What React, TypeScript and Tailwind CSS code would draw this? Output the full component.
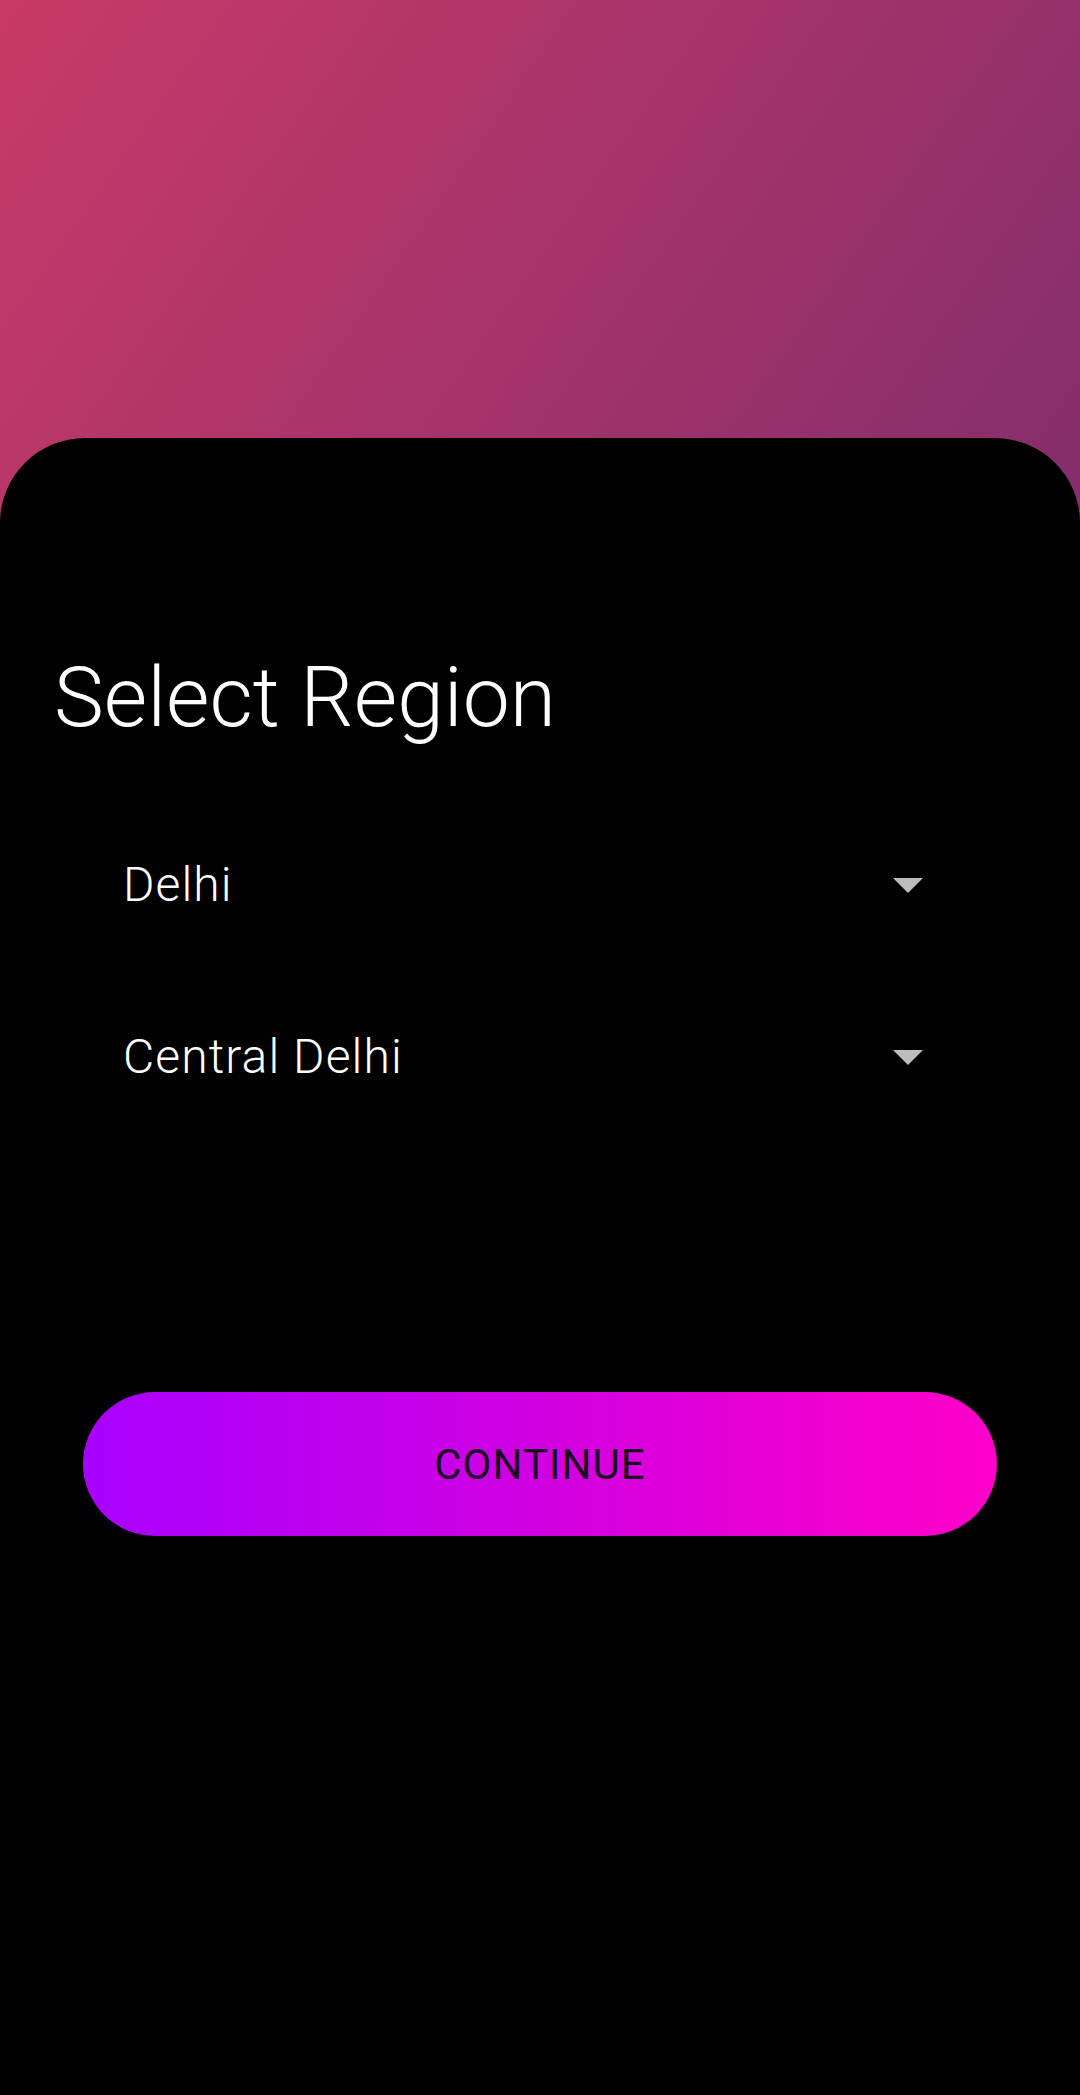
import { useState } from "react";

function Caret() {
  return (
    <svg width="30" height="15" viewBox="0 0 30 15" className="shrink-0">
      <path d="M0 0 L30 0 L15 15 Z" fill="#bdbdbd" />
    </svg>
  );
}

function RegionSelect({ value }: { value: string }) {
  return (
    <div className="flex items-center justify-between h-[100px]">
      <span className="text-[48px] leading-none font-light tracking-[1.1px] text-white">{value}</span>
      <Caret />
    </div>
  );
}

export default function App() {
  const [state] = useState("Delhi");
  const [district] = useState("Central Delhi");

  return (
    <div className="min-h-[2095px] bg-black font-['Roboto',sans-serif]">
      {/* Header gradient */}
      <div className="h-[520px] bg-[linear-gradient(125deg,#c83a67_0%,#a3336a_55%,#832e6b_100%)]" />

      {/* Sheet */}
      <div className="-mt-[82px] bg-black rounded-t-[85px] pt-[218px] pb-20">
        <h1 className="pl-[54px] text-[84px] leading-none font-light text-white">Select Region</h1>

        <div className="mt-[95px] pl-[123px] pr-[157px] flex flex-col gap-[72px]">
          <RegionSelect value={state} />
          <RegionSelect value={district} />
        </div>

        <div className="mt-[285px] px-[83px]">
          <button className="w-full h-[144px] rounded-full bg-[linear-gradient(90deg,#a800ff_0%,#d000e0_50%,#ff00c8_100%)] text-[42px] text-[#1b0a1f] tracking-wide">
            CONTINUE
          </button>
        </div>
      </div>
    </div>
  );
}
